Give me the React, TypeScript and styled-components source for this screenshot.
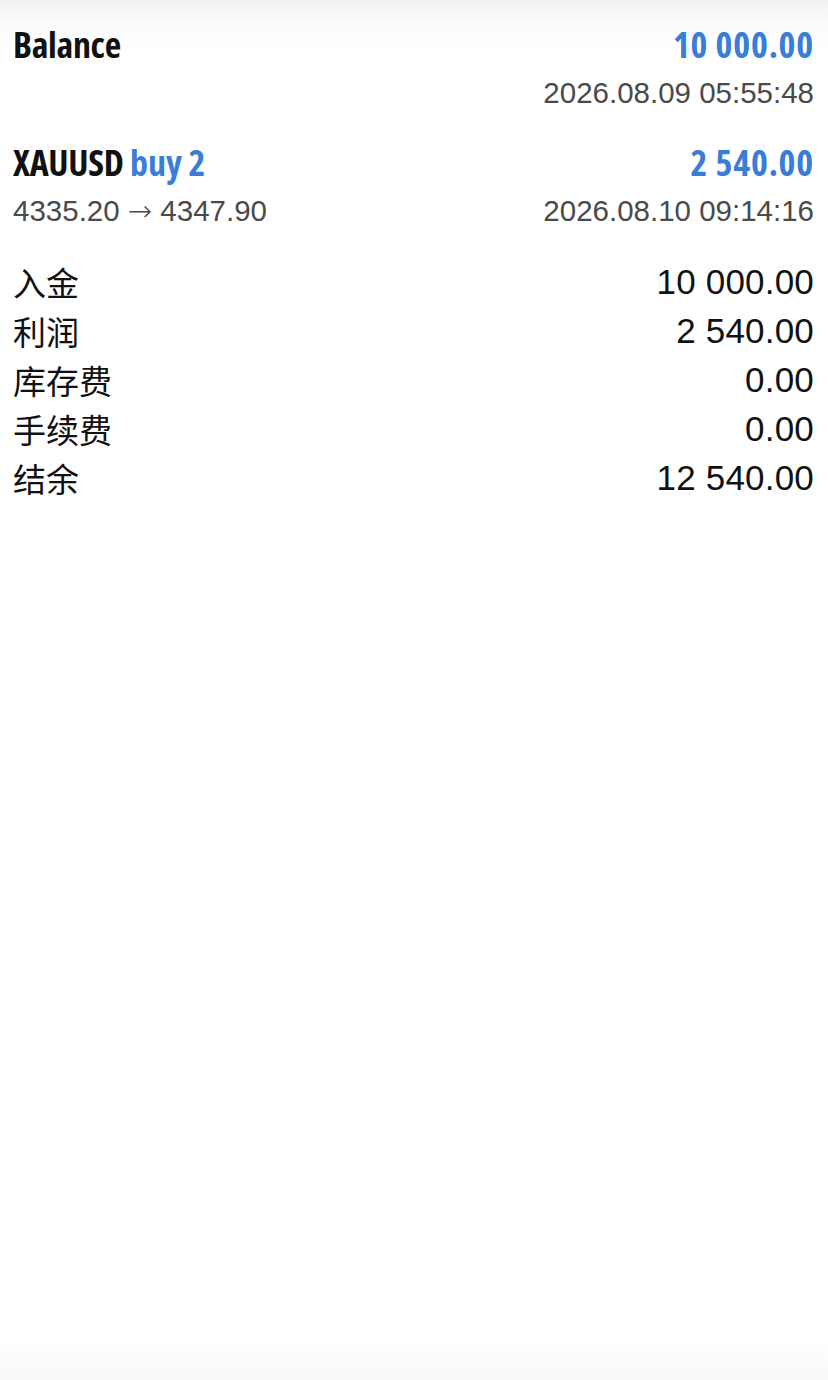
import styled, { createGlobalStyle } from "styled-components";

const GlobalStyle = createGlobalStyle`
  html, body {
    margin: 0;
    padding: 0;
    background: #ffffff;
  }
  body {
    font-family: "Liberation Sans", Arial, sans-serif;
  }
`;

const Page = styled.main`
  width: 828px;
  height: 1380px;
  box-sizing: border-box;
  padding: 21px 14px 0 13px;
  display: flex;
  flex-direction: column;
  background:
    linear-gradient(to bottom, #f2f2f2 0px, #fbfbfb 22px, rgba(255, 255, 255, 0) 50px),
    linear-gradient(to top, #f8f8f8 0px, rgba(255, 255, 255, 0) 40px),
    #ffffff;
`;

const Deal = styled.section`
  display: flex;
  flex-direction: column;
  margin-bottom: 22px;
`;

const Line = styled.div`
  display: flex;
  justify-content: space-between;
  align-items: baseline;
`;

const Title = styled.span`
  font-family: "Open Sans", sans-serif;
  font-stretch: 75%;
  font-weight: 700;
  font-size: 36px;
  line-height: 48px;
  color: #111111;
  letter-spacing: -0.3px;
`;

const Accent = styled.span`
  color: #3a7dd8;
  letter-spacing: 0;
`;

const Profit = styled(Title)`
  color: #3a7dd8;
  letter-spacing: 0.8px;
`;

const Sub = styled.span`
  font-family: "Liberation Sans", Arial, sans-serif;
  font-size: 29.5px;
  line-height: 48px;
  color: #4a4a4a;
`;

const Arrow = styled.span`
  font-family: "DejaVu Sans", sans-serif;
  font-weight: 300;
  font-size: 29px;
`;

const Summary = styled.section`
  display: flex;
  flex-direction: column;
`;

const SummaryRow = styled.div`
  display: flex;
  justify-content: space-between;
  align-items: center;
  height: 49px;
`;

const Label = styled.span`
  font-family: "Noto Sans CJK SC", "Noto Sans", sans-serif;
  font-size: 33px;
  color: #111111;
`;

const Value = styled.span`
  font-family: "Liberation Sans", Arial, sans-serif;
  font-size: 35px;
  color: #111111;
  letter-spacing: 0.2px;
`;

const deals = [
  { title: "Balance", extra: "", from: "", to: "", amount: "10 000.00", time: "2026.08.09 05:55:48" },
  { title: "XAUUSD", extra: "buy 2", from: "4335.20", to: "4347.90", amount: "2 540.00", time: "2026.08.10 09:14:16" },
];

const summary = [
  { label: "入金", value: "10 000.00" },
  { label: "利润", value: "2 540.00" },
  { label: "库存费", value: "0.00" },
  { label: "手续费", value: "0.00" },
  { label: "结余", value: "12 540.00" },
];

export default function App() {
  return (
    <>
      <GlobalStyle />
      <Page>
        {deals.map((d) => (
          <Deal key={d.title}>
            <Line>
              <Title>
                {d.title}
                {d.extra && <Accent> {d.extra}</Accent>}
              </Title>
              <Profit>{d.amount}</Profit>
            </Line>
            <Line>
              <Sub>
                {d.from && (
                  <>
                    {d.from} <Arrow>→</Arrow> {d.to}
                  </>
                )}
              </Sub>
              <Sub>{d.time}</Sub>
            </Line>
          </Deal>
        ))}
        <Summary>
          {summary.map((s) => (
            <SummaryRow key={s.label}>
              <Label>{s.label}</Label>
              <Value>{s.value}</Value>
            </SummaryRow>
          ))}
        </Summary>
      </Page>
    </>
  );
}
